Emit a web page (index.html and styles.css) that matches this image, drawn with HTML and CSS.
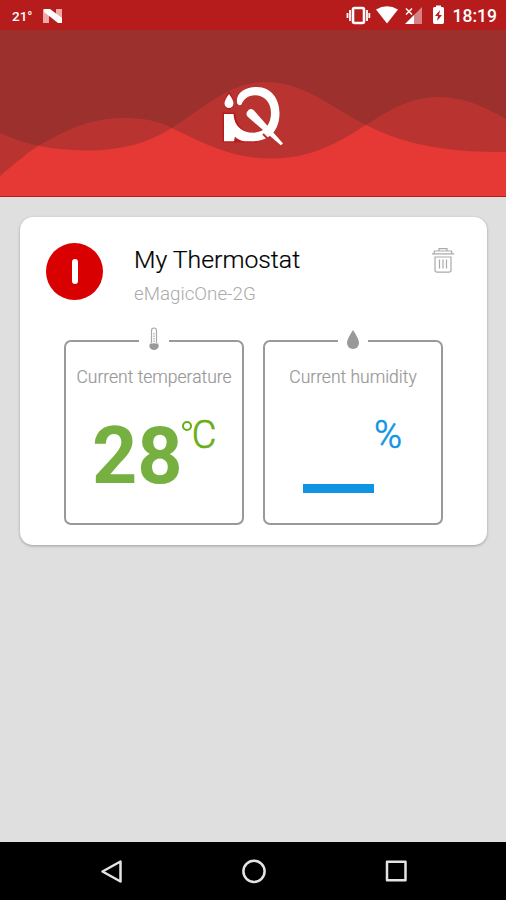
FILE: index.html
```
<!DOCTYPE html>
<html lang="en">
<head>
	<title>My Thermostat</title>
	<meta charset="utf-8">
	<link rel="stylesheet" href="styles.css">
</head>
<body>
	<div class="statusbar">
		<span class="outside">21°</span>
		<svg class="nougat" width="20" height="16" viewBox="0 0 20 16">
			<path d="M0 1l6 3v11H0zM19 1v13l-6-3V1z" fill="#f0a9a5"/>
			<path d="M1 1h6l12 9v5h-4L1 4z" fill="#fff"/>
		</svg>
		<svg class="tray" width="100" height="24" viewBox="346 4 100 24" fill="#fff">
			<rect x="353" y="8" width="11" height="15" rx="1.5" fill="none" stroke="#fff" stroke-width="2.6"/>
			<path d="M350 10v11M367 10v11M347.500 13v5M369.300 13v5" stroke="#fff" stroke-width="1.800"/>
			<path d="M376 9.500q11-6.500 22 0L387 23.500z"/>
			<path d="M405 24l9-9v9z"/>
			<path d="M414 15l8-8v17h-8z" opacity=".45"/>
			<path d="M406 8.500l6 6M412 8.500l-6 6" stroke="#fff" stroke-width="1.500"/>
			<path d="M433 8.500q0-1.500 1.500-1.500h1.500v-1.500h5V7h1.500q1.500 0 1.500 1.500V22q0 2-1.500 2h-8q-1.500 0-1.500-2z"/>
			<path d="M440 10l-5 6h3l-1 5 5-6h-3z" fill="#b71c1c"/>
		</svg>
		<span class="clock">18:19</span>
	</div>
	<div class="header">
		<svg width="506" height="166" viewBox="0 30 506 166">
			<g class="wave">
				<path d="M0 30V133C28 146 58 150.500 88 150.500C122 150.500 148 143 172 128C205 107 230 82 265 82C305 82 330 107 366 125C410 147 450 152 506 152V30z"/>
				<path d="M0 30V176C18 161 29 151 40 145C68 129 92 118 122 118C142 118 157 120 172 128C210 147 235 158.500 272 158.500C310 158.500 336 144 366 125C392 108 412 97 438 97C462 97 482 105 506 119V30z"/>
			</g>
			<g class="logo-edge">
				<path d="M229 94q-7 12 0 14q7-2 0-14z"/>
				<path d="M241 101C242 84 276 84 275 114C275 129 266 137 254 137C244 137 237 128 234 119"/>
				<path d="M224 114h10q1 14 12 19l8 8h-19v-3l-1 3h-10z"/>
			</g>
			<g class="logo">
				<path d="M229 94q-4.500 6-4.500 9.500a4.500 4.500 0 0 0 9 0q0-3.500-4.500-9.500z"/>
				<path d="M224 114h9.500C234 126 242 132.700 253 132.700V141.300H247C241 141.300 237 139 235 136.500L234 141.300H224z"/>
				<path d="M237.200 103.500C235 93 245 87 257 87C271 87 279.500 99 279.500 113C279.500 131 269 141.300 252 141.300V132.700C264 133 271 125 271 113C271 102 264 95.300 255 95.300C248 95.300 243.500 99.500 241.500 104.500Q239 106.500 237.200 103.500z"/>
				<path class="gap" d="M263 134l6 6"/>
				<path d="M247 112Q249.500 107.500 253.500 110L283 143.500L280.800 145.300L248 117Q245.500 115 247 112z"/>
			</g>
		</svg>
	</div>
	<div class="content">
		<div class="card">
			<div class="device">
				<div class="power"><span></span></div>
				<div class="names">
					<div class="name">My Thermostat</div>
					<div class="model">eMagicOne-2G</div>
				</div>
				<svg class="trash" width="24" height="26" viewBox="0 0 24 26">
					<path d="M8 3.500V1.700h8v1.800M3 6.500l.5-2.500h17l.5 2.500M1 6.800h22"/>
					<path d="M4 10v13q0 2.200 2 2.200h12q2 0 2-2.200V10zM8.500 12.500v9M12 12.500v9M15.500 12.500v9"/>
				</svg>
			</div>
			<div class="readings">
				<div class="box">
					<div class="tab">
						<svg width="12" height="26" viewBox="0 0 12 26">
							<path d="M3.500 16V3.500a2.500 2.500 0 0 1 5 0V16" fill="#fff" stroke="#aaa" stroke-width="1.200"/>
							<path d="M6 6v12" stroke="#bbb" stroke-width="1.500" stroke-dasharray="1.500 1"/>
							<path d="M2 16.500h8q1.500 3-.5 5q-3.500 3-7 0q-2-2-.5-5z" fill="#999"/>
						</svg>
					</div>
					<div class="label">Current temperature</div>
					<div class="value temp">28<span class="unit"><i></i>C</span></div>
				</div>
				<div class="box">
					<div class="tab">
						<svg width="12" height="26" viewBox="0 0 12 26">
							<path d="M6 3Q0 12 0 16a6 6 0 0 0 12 0Q12 12 6 3z" fill="#999"/>
						</svg>
					</div>
					<div class="label">Current humidity</div>
					<div class="value humidity"><span class="dash"></span><span class="unit">%</span></div>
				</div>
			</div>
		</div>
	</div>
	<div class="navbar">
		<svg width="506" height="58" viewBox="0 842 506 58">
			<path d="M120.500 861.500v20L102.500 871.500z"/>
			<circle cx="254" cy="871.300" r="10.600"/>
			<rect x="387" y="861.800" width="18.500" height="18.500"/>
		</svg>
	</div>
</body>
</html>
```
FILE: styles.css
```
*{
	box-sizing: border-box;
}
body{
	margin: 0;
	width: 506px;
	height: 900px;
	display: flex;
	flex-direction: column;
	overflow: hidden;
	background: #dfdfdf;
	font-family: Roboto, "Liberation Sans", sans-serif;
}
svg{
	display: block;
}
.statusbar{
	height: 30px;
	display: flex;
	align-items: center;
	padding: 1px 9px 0 12px;
	background: #b71c1c;
	color: #fff;
}
.outside{
	width: 31px;
	font-size: 13.5px;
	font-weight: 500;
}
.tray{
	margin-left: auto;
}
.clock{
	margin-left: 7px;
	font-size: 17.5px;
	font-weight: 500;
}
.header{
	height: 167px;
	background: #e63935;
	border-bottom: 1px solid #c4161a;
}
.wave{
	fill: #5f2926;
	fill-opacity: .333;
}
.logo{
	fill: #fff;
}
.logo-edge{
	fill: none;
	stroke: #b71c1c;
	stroke-width: 3;
}
.logo .gap{
	stroke: #b93330;
	stroke-width: 2;
}
.content{
	flex: 1;
	padding: 20px 19px 0 20px;
}
.card{
	height: 328px;
	padding: 26px 32px 0 26px;
	border-radius: 13px;
	background: #fff;
	box-shadow: 0 1px 3px rgba(0,0,0,.3);
}
.device{
	display: flex;
	height: 97px;
}
.power{
	width: 57px;
	height: 57px;
	display: flex;
	align-items: center;
	justify-content: center;
	border-radius: 50%;
	background: #d80000;
}
.power span{
	width: 6px;
	height: 25px;
	border-radius: 3px;
	background: #fff;
}
.names{
	margin-left: 31px;
}
.name{
	font-size: 24.8px;
	line-height: 33px;
	font-weight: 300;
	color: #000;
	-webkit-text-stroke: .2px currentColor;
}
.model{
	margin-top: 8px;
	font-size: 18.8px;
	line-height: 20px;
	font-weight: 300;
	color: #aaa;
}
.trash{
	margin: 4px 0 0 auto;
	fill: none;
	stroke: #aaa;
	stroke-width: 1.2;
}
.readings{
	display: flex;
	gap: 19px;
	padding-left: 18px;
}
.box{
	width: 180px;
	height: 185px;
	border: 2px solid #999;
	border-radius: 7px;
}
.tab{
	width: 30px;
	height: 26px;
	margin: -15px auto 0;
	display: flex;
	justify-content: center;
	background: #fff;
}
.label{
	margin-top: 14px;
	text-align: center;
	font-size: 17.5px;
	line-height: 21px;
	font-weight: 300;
	color: #999;
	-webkit-text-stroke: .2px currentColor;
}
.value{
	display: flex;
	align-items: flex-start;
}
.temp{
	padding: 28px 0 0 26px;
	font-size: 79px;
	line-height: 80px;
	font-weight: 700;
	color: #76b041;
}
.unit{
	display: flex;
	font-size: 38px;
	line-height: 40px;
	font-weight: 300;
	-webkit-text-stroke: .6px currentColor;
}
.temp .unit{
	margin: -1px 0 0 -1px;
	color: #69ad18;
}
.unit i{
	width: 10px;
	height: 10px;
	margin-top: 6px;
	border: 2px solid #69ad18;
	border-radius: 50%;
}
.humidity{
	padding: 27px 0 0 38px;
	color: #0f94e4;
}
.dash{
	width: 71px;
	height: 9px;
	margin-top: 69px;
	background: #0f94e4;
}
.navbar{
	height: 58px;
	background: #000;
}
.navbar svg{
	fill: none;
	stroke: #e4e4e4;
	stroke-width: 2.5;
	stroke-linejoin: round;
}
```
